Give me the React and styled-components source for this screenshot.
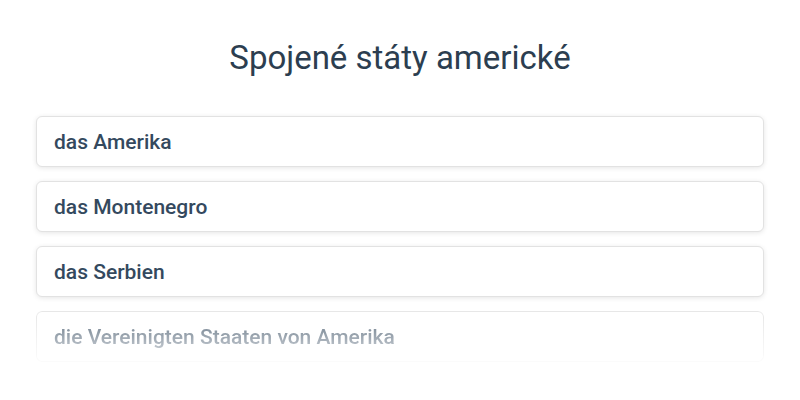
import React from "react";
import styled, { createGlobalStyle } from "styled-components";

const GlobalStyle = createGlobalStyle`
  html, body {
    margin: 0;
    padding: 0;
    background: #fff;
  }
  body {
    font-family: Roboto, "Noto Sans", sans-serif;
    color: #2c3e50;
  }
`;

const answers = [
  "das Amerika",
  "das Montenegro",
  "das Serbien",
  "die Vereinigten Staaten von Amerika",
];

const Page = styled.div`
  width: 800px;
  height: 400px;
  overflow: hidden;
  padding: 0 36px;
  box-sizing: border-box;
`;

const Question = styled.h1`
  margin: 0;
  padding: 38px 0;
  text-align: center;
  font-size: 33px;
  font-weight: 400;
  line-height: 40px;
  color: #2c3e50;
`;

const List = styled.ul`
  list-style: none;
  margin: 0;
  padding: 0;
  display: flex;
  flex-direction: column;
  gap: 14px;
`;

const Option = styled.li`
  height: 51px;
  box-sizing: border-box;
  display: flex;
  align-items: center;
  padding: 0 17px;
  border: 1px solid #e2e2e2;
  border-radius: 6px;
  background: #fff;
  box-shadow: 0 1px 5px rgba(0, 0, 0, 0.1);
  font-size: 21px;
  font-weight: 500;
  color: #34495e;
  ${(p) =>
    p.$fade &&
    `
    -webkit-mask-image: linear-gradient(to bottom, rgba(0,0,0,0.85), rgba(0,0,0,0.12));
    mask-image: linear-gradient(to bottom, rgba(0,0,0,0.85), rgba(0,0,0,0.12));
  `}
`;

export default function App() {
  return (
    <Page>
      <GlobalStyle />
      <Question>Spojené státy americké</Question>
      <List>
        {answers.map((a, i) => (
          <Option key={a} $fade={i === answers.length - 1}>
            {a}
          </Option>
        ))}
      </List>
    </Page>
  );
}
